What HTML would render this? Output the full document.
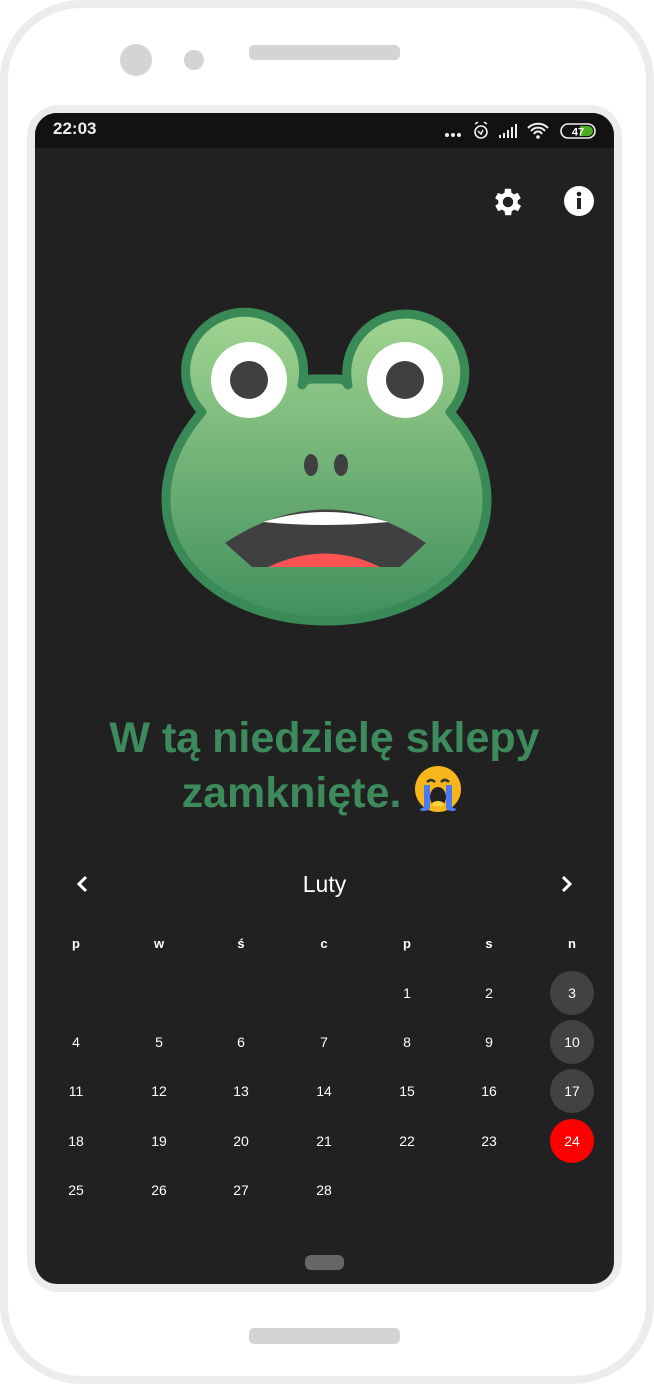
<!DOCTYPE html>
<html><head><meta charset="utf-8"><style>
*{margin:0;padding:0;box-sizing:border-box}
body{width:654px;height:1384px;background:#fff;position:relative;overflow:hidden;font-family:"Liberation Sans",sans-serif}
.abs{position:absolute}
.frame{left:0;top:0;width:654px;height:1384px;border:8px solid #ececec;border-radius:82px/80px;background:#fff}
.bezel{left:27px;top:105px;width:595px;height:1187px;background:#ececec;border-radius:32px}
.screen{left:35px;top:113px;width:579px;height:1171px;background:#212121;border-radius:22px;overflow:hidden}
.status{left:0;top:0;width:579px;height:35px;background:#121212}
.title{left:0;width:579px;text-align:center;color:#3d8b5c;font-weight:bold;font-size:43px;line-height:56px}
.cal{color:#fff;font-size:14px;text-align:center;width:44px;height:44px;line-height:44px;border-radius:50%}
.hd{color:#fff;font-size:13px;font-weight:bold;text-align:center;width:44px}
</style></head><body>
<div class="abs frame"></div>
<div class="abs" style="left:120px;top:44px;width:32px;height:32px;border-radius:50%;background:#d4d4d4"></div>
<div class="abs" style="left:184px;top:50px;width:20px;height:20px;border-radius:50%;background:#d4d4d4"></div>
<div class="abs" style="left:249px;top:45px;width:151px;height:15px;border-radius:5px;background:#d4d4d4"></div>
<div class="abs" style="left:249px;top:1328px;width:151px;height:16px;border-radius:5px;background:#d4d4d4"></div>
<div class="abs" style="left:650px;top:300px;width:4px;height:100px;background:#ececec"></div>
<div class="abs" style="left:650px;top:500px;width:4px;height:190px;background:#ececec"></div>
<div class="abs bezel"></div>
<div class="abs screen">
 <div class="abs status"></div>
 <div class="abs" style="left:18px;top:6px;color:#eee;font-weight:bold;font-size:17px">22:03</div>
 <svg class="abs" style="left:405px;top:5px" width="170" height="26" viewBox="0 0 170 26">
  <circle cx="7" cy="17" r="2" fill="#eee"/><circle cx="13" cy="17" r="2" fill="#eee"/><circle cx="19" cy="17" r="2" fill="#eee"/>
  <circle cx="41" cy="14" r="6" fill="none" stroke="#eee" stroke-width="1.6"/><path d="M38 13l3 3 2-4M35 6l3-2M47 6l-3-2" stroke="#eee" stroke-width="1.5" fill="none"/>
  <path d="M59 20h2v-3h-2zM63 20h2v-5h-2zM67 20h2v-8h-2zM71 20h2v-11h-2zM75 20h2v-14h-2z" fill="#eee"/>
  <path d="M88 10a14 14 0 0 1 20 0M91 13a9 9 0 0 1 14 0M94 16a4.5 4.5 0 0 1 8 0" stroke="#eee" stroke-width="2" fill="none"/><circle cx="98" cy="19" r="1.8" fill="#eee"/>
  <rect x="121" y="6" width="34" height="14" rx="7" fill="none" stroke="#eee" stroke-width="1.6"/><path d="M140 8h8a5 5 0 0 1 0 10h-8z" fill="#4caf20"/>
  <text x="138" y="17.5" font-size="11" font-weight="bold" fill="#fff" text-anchor="middle" font-family="Liberation Sans">47</text>
 </svg>
 <svg class="abs" style="left:455px;top:71px" width="36" height="36" viewBox="0 0 24 24"><path fill="#fff" d="M19.4 13a7.5 7.5 0 0 0 0-2l2.1-1.6-2-3.5-2.5 1a7 7 0 0 0-1.7-1L15 3.2h-4l-.4 2.7a7 7 0 0 0-1.7 1l-2.5-1-2 3.5L6.6 11a7.5 7.5 0 0 0 0 2l-2.1 1.6 2 3.5 2.5-1a7 7 0 0 0 1.7 1l.4 2.7h4l.4-2.7a7 7 0 0 0 1.7-1l2.5 1 2-3.5zM13 15.5a3.5 3.5 0 1 1 0-7 3.5 3.5 0 0 1 0 7z" transform="translate(-1 0)"/></svg>
 <svg class="abs" style="left:529px;top:73px" width="30" height="30" viewBox="0 0 30 30"><circle cx="15" cy="15" r="15" fill="#fff"/><rect x="13" y="12" width="4" height="11" fill="#212121"/><circle cx="15" cy="8" r="2.3" fill="#212121"/></svg>
 <svg class="abs" style="left:-35px;top:-113px" width="654" height="800" viewBox="0 0 654 800">
  <defs><linearGradient id="g" x1="0" y1="310" x2="0" y2="625" gradientUnits="userSpaceOnUse"><stop offset="0" stop-color="#a2d591"/><stop offset="1" stop-color="#3f8e5c"/></linearGradient></defs>
  <path d="M302 385 Q305 379 312 379 L338 379 Q345 379 348 385 A59 59 0 1 1 450 412 C474 440 487 468 487 500 C487 570 416 621 326 621 C236 621 166 570 166 500 C166 468 178 440 202 412 A59 59 0 1 1 302 385 Z" fill="url(#g)" stroke="#3a8a58" stroke-width="9" stroke-linejoin="round"/>
  <circle cx="249" cy="380" r="38" fill="#fff"/><circle cx="249" cy="380" r="19" fill="#404040"/>
  <circle cx="405" cy="380" r="38" fill="#fff"/><circle cx="405" cy="380" r="19" fill="#404040"/>
  <ellipse cx="311" cy="465" rx="7" ry="11" fill="#404040"/><ellipse cx="341" cy="465" rx="7" ry="11" fill="#404040"/>
  <path d="M225 543Q326 476 426 543L400 567H252z" fill="#404040"/>
  <path d="M263 522Q326 502 388 522Q326 528 263 522z" fill="#fff"/>
  <path d="M268 567Q326 540 380 567z" fill="#ff5252"/>
 </svg>
 <div class="abs title" style="top:597px">W tą niedzielę sklepy</div>
 <div class="abs title" style="top:652px;padding-right:4px">zamknięte. <span style="display:inline-block;width:50px;height:48px;vertical-align:-8px"><svg width="50" height="50" viewBox="0 0 50 50"><circle cx="25" cy="24" r="23" fill="#f9b51c"/><path d="M14 17q4-4 8 0M28 17q4-4 8 0" stroke="#333" stroke-width="2.5" fill="none"/><ellipse cx="25" cy="32" rx="8" ry="10" fill="#222"/><ellipse cx="25" cy="39" rx="6" ry="3" fill="#ffd43b"/><path d="M11 20h6v22q0 4-7 4 -3 0-3-2l4-2zM33 20h6v22l4 2q0 2-3 2-7 0-7-4z" fill="#4a7bf0"/></svg></span></div>
 <svg class="abs" style="left:40px;top:761px" width="14" height="20" viewBox="0 0 14 20"><path d="M11 3L4 10l7 7" stroke="#fff" stroke-width="3" fill="none"/></svg>
 <div class="abs" style="left:0;width:579px;top:758px;text-align:center;color:#fff;font-size:23px">Luty</div>
 <svg class="abs" style="left:525px;top:761px" width="14" height="20" viewBox="0 0 14 20"><path d="M3 3l7 7-7 7" stroke="#fff" stroke-width="3" fill="none"/></svg>
</div>
<div id="cal"></div>
<script>
var xs=[76,159,241,324,407,489,572],h=['p','w','ś','c','p','s','n'],o='';
h.forEach(function(t,i){o+='<div class="abs hd" style="left:'+(xs[i]-22)+'px;top:936px">'+t+'</div>';});
var ys=[993,1042,1091,1141,1190],d=1;
for(var r=0;r<5;r++)for(var c=0;c<7;c++){if(r==0&&c<4)continue;if(d>28)break;
var bg=c==6?(d==24?'#ff0000':'#424242'):'transparent';
o+='<div class="abs cal" style="left:'+(xs[c]-22)+'px;top:'+(ys[r]-22)+'px;background:'+bg+'">'+d+'</div>';d++;}
document.getElementById('cal').innerHTML=o;
</script>
<div class="abs" style="left:305px;top:1255px;width:39px;height:15px;border-radius:6px;background:#666"></div>
</body></html>
